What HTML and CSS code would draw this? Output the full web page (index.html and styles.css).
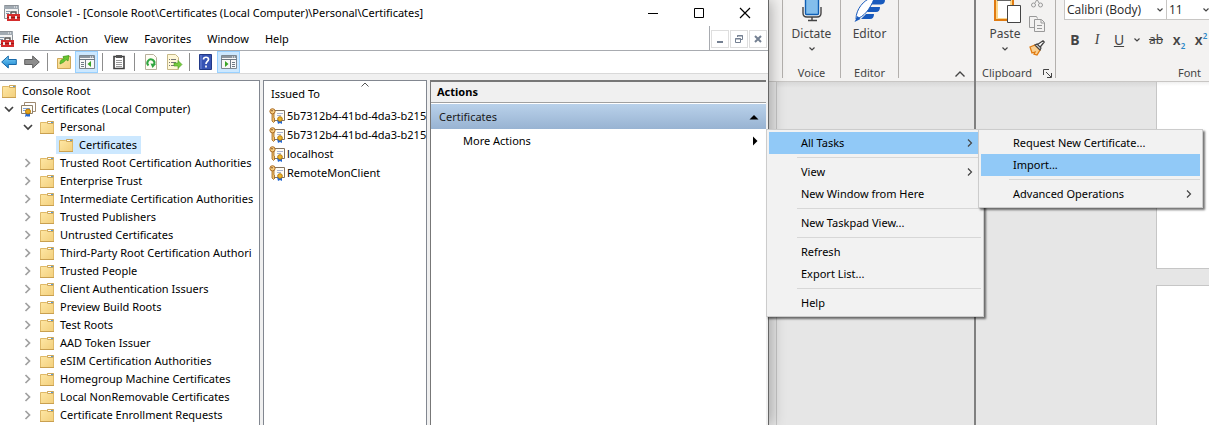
FILE: index.html
```html
<!DOCTYPE html>
<html lang="en">
<head>
<meta charset="utf-8">
<title>Console1</title>
<link rel="stylesheet" href="styles.css">
</head>
<body>
<svg class="sprite" aria-hidden="true">
  <defs>
    <linearGradient id="folder-fill" x1="0" y1="0" x2="1" y2="1"><stop offset="0" stop-color="#ffe8a6"/><stop offset="1" stop-color="#f2cf7c"/></linearGradient>
    <linearGradient id="blue-arrow" x1="0" y1="0" x2="0" y2="1"><stop offset="0" stop-color="#7fd0f7"/><stop offset="1" stop-color="#1683cf"/></linearGradient>
  </defs>
  <symbol id="i-folder" viewBox="0 0 16 16"><path d="M1.500 3.500h6l1-1h6v12h-13z" fill="url(#folder-fill)" stroke="#dfb968"/><path d="M8.500 2.500h6v2h-6z" fill="#fff" stroke="#cfa85a"/><path d="M12 3.500h2" stroke="#5b9bd0"/><path d="M1 14.500h14" stroke="#c9a050"/></symbol>
  <symbol id="i-right" viewBox="0 0 16 16"><path d="M5.500 4l4 4-4 4" fill="none" stroke="#a0a0a0" stroke-width="1.700"/></symbol>
  <symbol id="i-down" viewBox="0 0 16 16"><path d="M4 6l4 4 4-4" fill="none" stroke="#404040" stroke-width="1.700"/></symbol>
  <symbol id="i-certs" viewBox="0 0 16 16"><path d="M4.500 1.500h11v9h-11z" fill="#fff" stroke="#a08a70"/><path d="M1.500 4.500h11v8h-11z" fill="#fffdf5" stroke="#8e7f6a"/><path d="M3 7.500h7M3 9.500h4" stroke="#7d9fd8"/><path d="M6 11l-1 5 2-1 1 1 1-1 1 1 0-5z" fill="#2468d2"/><circle cx="8" cy="10.500" r="2.500" fill="#e4a51b" stroke="#b67808"/></symbol>
  <symbol id="i-keycert" viewBox="0 0 17 16"><path d="M4.500 2.500h11v10h-11z" fill="#fffdf5" stroke="#82725f"/><path d="M8 5.500h6M8 7.500h4" stroke="#a9b3d2"/><path d="M8 12l1 4 2-1 2 1 0-5z" fill="#2468d2"/><circle cx="11" cy="11" r="2.300" fill="#edb72a" stroke="#b67808"/><path d="M3 5v8l1.500 1.500L6 13l-1-1 1-1-1-1V5" fill="#f1bf67" stroke="#9c6220" stroke-width=".8"/><circle cx="3.500" cy="3.300" r="2.600" fill="#f8cd80" stroke="#a96b25"/><circle cx="3" cy="2.700" r=".8" fill="#704820"/></symbol>
  <symbol id="i-mmc" viewBox="0 0 16 16"><path d="M.5.500h14v13H.5z" fill="#f4f4f4" stroke="#8c9298"/><path d="M0 1h15v3H0z" fill="#a1aab2"/><path d="M10 2h1m1 0h1" stroke="#fff"/><path d="M2 6.500h4M2 8.500h3" stroke="#8195a8"/><path d="M7 9V7h5v2" fill="none" stroke="#555" stroke-width="1.400"/><path d="M3 9h13v7H3z" fill="#d42d2d"/><path d="M3 12.500h13" stroke="#981818"/><path d="M5 11h2v3H5zm6 0h2v3h-2z" fill="#ececec"/></symbol>
  <symbol id="i-chev" viewBox="0 0 8 8"><path d="M1.500 2.500L4 5l2.500-2.500" fill="none" stroke="#444" stroke-width="1.200"/></symbol>
  <symbol id="i-sub" viewBox="0 0 8 8"><path d="M2 .5L5.500 4 2 7.500" fill="none" stroke="#444" stroke-width="1.200"/></symbol>
</svg>

<main class="desktop">
  <section class="console" aria-label="Console1">
    <header class="titlebar">
      <svg class="icon"><use href="#i-mmc"/></svg>
      <h1 class="title">Console1 - [Console Root\Certificates (Local Computer)\Personal\Certificates]</h1>
      <div class="caption">
        <button class="cap" aria-label="Minimize"><svg viewBox="0 0 12 12"><path d="M1 6.500h10" stroke="#000"/></svg></button>
        <button class="cap" aria-label="Maximize"><svg viewBox="0 0 12 12"><path d="M1.500 1.500h9v9h-9z" fill="none" stroke="#000"/></svg></button>
        <button class="cap" aria-label="Close"><svg viewBox="0 0 12 12"><path d="M1 1l10 10M11 1L1 11" stroke="#000" stroke-width="1.200"/></svg></button>
      </div>
    </header>
    <div class="menubar">
      <nav class="menus">
        <svg class="icon"><use href="#i-mmc"/></svg>
        <button>File</button><button>Action</button><button>View</button><button>Favorites</button><button>Window</button><button>Help</button>
      </nav>
      <div class="mdi">
        <button aria-label="Minimize document"><svg viewBox="0 0 10 10"><path d="M2 8h6" stroke="#748092" stroke-width="2"/></svg></button>
        <button aria-label="Restore document"><svg viewBox="0 0 10 10"><path d="M3.500 3V1.500h5v4H7M1.500 4.500h5v4h-5zM1 5h6M3 2h6" fill="none" stroke="#748092"/></svg></button>
        <button aria-label="Close document"><svg viewBox="0 0 10 10"><path d="M2 2l6 6M8 2L2 8" stroke="#748092" stroke-width="2"/></svg></button>
      </div>
    </div>
    <div class="toolbar">
      <button aria-label="Back"><svg viewBox="0 0 16 16"><path d="M.7 8l6.600-6v3.500h8v5h-8V14z" fill="url(#blue-arrow)" stroke="#1768a8"/></svg></button>
      <button aria-label="Forward"><svg viewBox="0 0 16 16"><path d="M15.300 8L8.700 2v3.500h-8v5h8V14z" fill="#8d8d8d" stroke="#606060"/></svg></button>
      <i class="rule"></i>
      <button aria-label="Up one level"><svg viewBox="0 0 16 16"><path d="M1.500 4.500h5l2-2h6v12h-13z" fill="url(#folder-fill)" stroke="#cfa85a"/><path d="M4 10c0-4 2-5 4-5L7 2.500l6-1-1 5.500-2-1.500c-2 3-3 3-6 4.500z" fill="#67c52f" stroke="#3f981d" stroke-width=".7"/></svg></button>
      <button class="on" aria-label="Show console tree"><svg viewBox="0 0 16 16"><path d="M.5 1.500h15v13H.5z" fill="#f8f8f8" stroke="#7d8891"/><path d="M1 3h14" stroke="#8b959e" stroke-width="2"/><path d="M11 3h1m1 0h1" stroke="#fff"/><path d="M0 5.500h16M6.500 5v9M2 8.500h3M2 10.500h3M2 12.500h3" stroke="#6f7a84"/><path d="M12 7v6L8.500 10z" fill="#39a526"/></svg></button>
      <i class="rule"></i>
      <button aria-label="Properties"><svg viewBox="0 0 16 16"><path d="M3 2.500h10v12H3z" fill="#fff" stroke="#404040" stroke-width="1.600"/><path d="M5 1h6v3H5z" fill="#555"/><path d="M5 6.500h6M5 8.500h6M5 10.500h6M5 12.500h6" stroke="#999"/></svg></button>
      <i class="rule"></i>
      <button aria-label="Refresh"><svg viewBox="0 0 16 16"><path d="M2.500.500h8l3 3v12h-11z" fill="#fffdf4" stroke="#b7b09b"/><path d="M5.500 11.500a3.500 3.500 0 1 1 5.500-1" fill="none" stroke="#31a640" stroke-width="2"/><path d="M7.500 9.500L13 10l-3.500 4z" fill="#31a640"/></svg></button>
      <button aria-label="Export list"><svg viewBox="0 0 16 16"><path d="M1.500.500h8l3 3v12h-11z" fill="#fff8d8" stroke="#c6b887"/><path d="M3 5.500h1m1 0h5M3 8.500h1m1 0h5M3 11.500h1m1 0h5" stroke="#777"/><path d="M8 9h4V6.500l4 4-4 4V12H8z" fill="#75ca3d" stroke="#459c1c" stroke-width=".6"/></svg></button>
      <i class="rule"></i>
      <button aria-label="Help"><svg viewBox="0 0 16 16"><path d="M1.500.500h12v15h-12z" fill="#3653b4" stroke="#223987"/><path d="M3 1v14" stroke="#7189d8"/><path d="M5.500 5.500c0-3 5-3 5 0 0 2-2.500 2-2.500 4.500M8 11.500v2" fill="none" stroke="#fff" stroke-width="1.700"/></svg></button>
      <button class="on" aria-label="Show action pane"><svg viewBox="0 0 16 16"><path d="M.5 1.500h15v13H.5z" fill="#f8f8f8" stroke="#7d8891"/><path d="M1 3h14" stroke="#8b959e" stroke-width="2"/><path d="M11 3h1m1 0h1" stroke="#fff"/><path d="M0 5.500h16M9.500 5v9M11 8.500h3M11 10.500h3M11 12.500h3" stroke="#6f7a84"/><path d="M4 7v6l3.500-3z" fill="#39a526"/></svg></button>
    </div>
    <div class="panes">
      <nav class="tree pane" aria-label="Console tree">
        <ul>
          <li class="node root"><svg class="icon"><use href="#i-folder"/></svg><span>Console Root</span></li>
          <li class="node"><button aria-label="Collapse"><svg><use href="#i-down"/></svg></button><svg class="icon"><use href="#i-certs"/></svg><span>Certificates (Local Computer)</span></li>
          <li class="node l2"><button aria-label="Collapse"><svg><use href="#i-down"/></svg></button><svg class="icon"><use href="#i-folder"/></svg><span>Personal</span></li>
          <li class="node l3"><div class="picked"><svg class="icon"><use href="#i-folder"/></svg><span>Certificates</span></div></li>
          <li class="node l2"><button aria-label="Expand"><svg><use href="#i-right"/></svg></button><svg class="icon"><use href="#i-folder"/></svg><span>Trusted Root Certification Authorities</span></li>
          <li class="node l2"><button aria-label="Expand"><svg><use href="#i-right"/></svg></button><svg class="icon"><use href="#i-folder"/></svg><span>Enterprise Trust</span></li>
          <li class="node l2"><button aria-label="Expand"><svg><use href="#i-right"/></svg></button><svg class="icon"><use href="#i-folder"/></svg><span>Intermediate Certification Authorities</span></li>
          <li class="node l2"><button aria-label="Expand"><svg><use href="#i-right"/></svg></button><svg class="icon"><use href="#i-folder"/></svg><span>Trusted Publishers</span></li>
          <li class="node l2"><button aria-label="Expand"><svg><use href="#i-right"/></svg></button><svg class="icon"><use href="#i-folder"/></svg><span>Untrusted Certificates</span></li>
          <li class="node l2"><button aria-label="Expand"><svg><use href="#i-right"/></svg></button><svg class="icon"><use href="#i-folder"/></svg><span>Third-Party Root Certification Authori</span></li>
          <li class="node l2"><button aria-label="Expand"><svg><use href="#i-right"/></svg></button><svg class="icon"><use href="#i-folder"/></svg><span>Trusted People</span></li>
          <li class="node l2"><button aria-label="Expand"><svg><use href="#i-right"/></svg></button><svg class="icon"><use href="#i-folder"/></svg><span>Client Authentication Issuers</span></li>
          <li class="node l2"><button aria-label="Expand"><svg><use href="#i-right"/></svg></button><svg class="icon"><use href="#i-folder"/></svg><span>Preview Build Roots</span></li>
          <li class="node l2"><button aria-label="Expand"><svg><use href="#i-right"/></svg></button><svg class="icon"><use href="#i-folder"/></svg><span>Test Roots</span></li>
          <li class="node l2"><button aria-label="Expand"><svg><use href="#i-right"/></svg></button><svg class="icon"><use href="#i-folder"/></svg><span>AAD Token Issuer</span></li>
          <li class="node l2"><button aria-label="Expand"><svg><use href="#i-right"/></svg></button><svg class="icon"><use href="#i-folder"/></svg><span>eSIM Certification Authorities</span></li>
          <li class="node l2"><button aria-label="Expand"><svg><use href="#i-right"/></svg></button><svg class="icon"><use href="#i-folder"/></svg><span>Homegroup Machine Certificates</span></li>
          <li class="node l2"><button aria-label="Expand"><svg><use href="#i-right"/></svg></button><svg class="icon"><use href="#i-folder"/></svg><span>Local NonRemovable Certificates</span></li>
          <li class="node l2"><button aria-label="Expand"><svg><use href="#i-right"/></svg></button><svg class="icon"><use href="#i-folder"/></svg><span>Certificate Enrollment Requests</span></li>
        </ul>
      </nav>
      <div class="list pane">
        <svg class="sort" viewBox="0 0 8 5"><path d="M.5 4.500L4 1l3.500 3.500" fill="none" stroke="#555"/></svg>
        <table>
          <thead><tr><th>Issued To</th></tr></thead>
          <tbody>
            <tr><td><div class="cert"><svg><use href="#i-keycert"/></svg>5b7312b4-41bd-4da3-b215</div></td></tr>
            <tr><td><div class="cert"><svg><use href="#i-keycert"/></svg>5b7312b4-41bd-4da3-b215</div></td></tr>
            <tr><td><div class="cert"><svg><use href="#i-keycert"/></svg>localhost</div></td></tr>
            <tr><td><div class="cert"><svg><use href="#i-keycert"/></svg>RemoteMonClient</div></td></tr>
          </tbody>
        </table>
      </div>
      <aside class="actions">
        <h2>Actions</h2>
        <button class="section"><span>Certificates</span><svg viewBox="0 0 10 10"><path d="M.5 7.500h9L5 3z"/></svg></button>
        <div class="more">
          <button class="more-btn"><span>More Actions</span><svg viewBox="0 0 10 10"><path d="M3 .500v9L7.500 5z"/></svg></button>
          <ul class="popup">
            <li class="has-sub"><button class="hot">All Tasks<svg><use href="#i-sub"/></svg></button>
              <ul class="popup sub">
                <li><button>Request New Certificate...</button></li>
                <li><button class="hot">Import...</button></li>
                <li class="sep"></li>
                <li><button>Advanced Operations<svg><use href="#i-sub"/></svg></button></li>
              </ul>
            </li>
            <li class="sep"></li>
            <li><button>View<svg><use href="#i-sub"/></svg></button></li>
            <li><button>New Window from Here</button></li>
            <li class="sep"></li>
            <li><button>New Taskpad View...</button></li>
            <li class="sep"></li>
            <li><button>Refresh</button></li>
            <li><button>Export List...</button></li>
            <li class="sep"></li>
            <li><button>Help</button></li>
          </ul>
        </div>
      </aside>
    </div>
  </section>

  <section class="word first" aria-label="Document window">
    <div class="ribbon">
      <div class="group">
        <button class="big"><svg viewBox="0 0 32 24"><path d="M9.500 -6h13v19.500q0 1-1 1h-11q-1 0-1-1z" fill="#83beec" stroke="#0f5fb4" stroke-width="1.400"/><path d="M7 7v6q0 4 4 4h10q4 0 4-4V7M16 17v3M12 20.500h9" fill="none" stroke="#444" stroke-width="1.400"/></svg>Dictate<svg class="chev"><use href="#i-chev"/></svg></button>
        <span class="label">Voice</span>
      </div>
      <div class="group">
        <button class="big"><svg viewBox="0 0 32 24"><path d="M16 2V-2h16v2q0 4-4 4.500H17M16 7h11q0 5-4 5H14M13 14h8q0 5-4 5H8z" fill="#185abd"/><path d="M3 19C3 9 11 0 18-2l3 1C17 9 11 17 3 19z" fill="#fff" stroke="#185abd"/><path d="M1.500 22l3-6 3 3z" fill="#185abd"/></svg>Editor</button>
        <span class="label">Editor</span>
      </div>
      <button class="collapse" aria-label="Collapse ribbon"><svg viewBox="0 0 10 6"><path d="M.5 5.500L5 1l4.500 4.500" fill="none" stroke="#444" stroke-width="1.400"/></svg></button>
    </div>
    <div class="canvas"></div>
  </section>

  <section class="word second" aria-label="Document window">
    <div class="ribbon">
      <div class="group clip">
        <div class="clip-tools">
          <button class="big"><svg viewBox="0 0 32 24"><path d="M6-4h18v24H6z" fill="#fbd78b" stroke="#e07a10" stroke-width="2"/><path d="M9-2h12v20H9z" fill="#fff"/><path d="M8 .500h14" stroke="#666"/><path d="M18.500 5.500h13v17h-13z" fill="#fff" stroke="#444"/></svg>Paste<svg class="chev"><use href="#i-chev"/></svg></button>
          <div class="mini">
            <button aria-label="Cut"><svg viewBox="0 0 16 16"><path d="M4 0l6 11M12 0L6 11" stroke="#999"/><circle cx="4.500" cy="13" r="2" fill="none" stroke="#999"/><circle cx="11.500" cy="13" r="2" fill="none" stroke="#999"/></svg></button>
            <button aria-label="Copy"><svg viewBox="0 0 16 16"><path d="M5 11.500H.5V.500h7l1 2" fill="#f3f2f1" stroke="#999"/><path d="M5.500 3.500h7l3 3v9h-10z" fill="#f3f2f1" stroke="#999"/><path d="M12 4v3h3M8 9.500h5M8 12.500h5" fill="none" stroke="#999"/></svg></button>
            <button aria-label="Format painter"><svg viewBox="0 0 16 16"><path d="M1 7l5-2 5 5-3 5-3-1 1-2-3 1z" fill="#f9cf91" stroke="#e07a10" stroke-width="1.300"/><path d="M6 5l2-1 4 4-1 2zM8.500 4.500L14 .800l1.200 1.200-4 5" fill="#fff" stroke="#444" stroke-width="1.300"/></svg></button>
          </div>
        </div>
        <div class="clip-label"><span>Clipboard</span><button aria-label="Clipboard options"><svg viewBox="0 0 9 9"><path d="M.5 6V.500H6M3 3l5 5M8.500 4v4.500H4" fill="none" stroke="#444"/></svg></button></div>
      </div>
      <div class="group font">
        <div class="combos">
          <div class="combo"><select aria-label="Font name"><option>Calibri (Body)</option></select><svg class="chev"><use href="#i-chev"/></svg></div>
          <div class="combo size"><select aria-label="Font size"><option>11</option></select><svg class="chev"><use href="#i-chev"/></svg></div>
        </div>
        <div class="formats">
          <button class="b">B</button><button class="i">I</button><button class="u">U</button><button aria-label="Underline styles" class="drop"><svg class="chev"><use href="#i-chev"/></svg></button><button class="s">ab</button><button class="x">x<sub>2</sub></button><button class="x">x<sup>2</sup></button>
        </div>
        <span class="label">Font</span>
      </div>
    </div>
    <div class="canvas pages"><div class="page"></div><div class="page"></div></div>
  </section>
</main>
</body>
</html>
```
FILE: styles.css
```css
* { box-sizing: border-box; }
body {
  margin: 0;
  font: 11px/18px "Noto Sans", "Open Sans", sans-serif;
  color: #000;
  overflow: hidden;
}
button {
  font: inherit;
  color: inherit;
  background: none;
  border: 0;
  padding: 0;
  margin: 0;
}
svg { display: block; flex: none; overflow: visible; }
ul { list-style: none; margin: 0; padding: 0; }
.sprite { position: absolute; width: 0; height: 0; }
.icon { width: 16px; height: 16px; }

.desktop {
  display: grid;
  grid-template-columns: minmax(0, 769fr) minmax(0, 205fr) minmax(0, 235fr);
  min-height: 100vh;
}

/* Console window */
.console {
  position: relative;
  z-index: 2;
  display: flex;
  flex-direction: column;
  height: 100vh;
  background: #fff;
  border-right: 1px solid #666;
  box-shadow: 2px 0 14px rgba(0, 0, 0, .3);
}
.titlebar { display: flex; align-items: center; height: 26px; padding-left: 4px; }
.title { flex: 1; margin: 0 0 0 6px; font-size: 11px; font-weight: 400; white-space: nowrap; }
.caption { display: flex; }
.cap { width: 46px; height: 24px; display: grid; place-items: center; }
.cap svg { width: 12px; height: 12px; }
.menubar { display: flex; height: 25px; border-bottom: 1px solid #a8abb0; }
.menus { flex: 1; display: flex; align-items: center; padding-top: 2px; }
.menus .icon { margin: 0 2px 0 -2px; }
.menus button { padding: 0 6px; margin-right: 4px; }
.mdi { display: flex; gap: 1px; padding: 4px 1px 0 1px; border-left: 1px solid #a8abb0; }
.mdi button { display: grid; place-items: center; width: 18px; height: 18px; border: 1px solid #dedede; }
.mdi svg { width: 10px; height: 10px; }
.toolbar { display: flex; align-items: center; height: 23px; margin-left: -3px; border-bottom: 1px solid #d9d9d9; }
.toolbar button { display: grid; place-items: center; width: 23px; height: 22px; }
.toolbar svg { width: 16px; height: 16px; }
.toolbar .on { background: #cce8ff; border: 1px solid #99d1ff; }
.rule { width: 1px; height: 18px; margin: 0 4px; background: #8d8d8d; }

.panes {
  flex: 1;
  min-height: 0;
  display: grid;
  grid-template-columns: minmax(0, 260fr) minmax(0, 164fr) minmax(0, 336fr);
  gap: 3px;
  padding: 6px 2px 0 0;
  background: #f0f0f0;
}
.pane { background: #fff; border: 1px solid #828790; border-bottom: 0; overflow: hidden; white-space: nowrap; }
.tree { border-left: 0; padding: 1px 0 0 1px; }
.node { display: flex; align-items: center; height: 18px; }
.node button { width: 16px; height: 16px; margin-right: 3px; }
.node button svg { width: 16px; height: 16px; }
.node span { margin-left: 5px; }
.l2 { padding-left: 19px; }
.l3 { padding-left: 55px; }
.picked { display: flex; align-items: center; height: 18px; padding: 0 4px 0 2px; background: #cce8ff; }

.list { position: relative; }
.list table { width: 100%; border-collapse: collapse; table-layout: fixed; }
.list th { height: 25px; padding: 1px 0 0 7px; font-weight: 400; text-align: left; }
.list td { padding: 0; overflow: hidden; }
.cert { display: flex; align-items: center; gap: 1px; height: 19px; padding-left: 5px; }
.cert svg { width: 17px; height: 16px; }
.sort { position: absolute; top: 1px; left: 60%; width: 8px; height: 5px; }

.actions { min-width: 0; background: #fff; border: solid #777; border-width: 2px 0 0 1px; }
.actions h2 { margin: 0; padding: 1px 6px 0; height: 21px; font-size: 11px; line-height: 18px; font-weight: 700; background: #f0f0f0; border-bottom: 1px solid #a0a0a0; }
.section {
  display: flex; align-items: center; justify-content: space-between;
  width: 100%; height: 25px; margin-top: 1px; padding: 0 7px 0 8px;
  background: linear-gradient(#b9d1ea, #98b3d2);
  color: #1a1a1a;
}
.section svg, .more-btn svg { width: 10px; height: 10px; }
.more { position: relative; }
.more-btn { display: flex; align-items: center; justify-content: space-between; width: 100%; height: 24px; padding: 0 6px 0 32px; }

.popup {
  position: absolute;
  top: 0;
  left: 100%;
  z-index: 3;
  width: 218px;
  padding: 2px;
  background: #f2f2f2;
  border: 1px solid #ccc;
  box-shadow: 2px 2px 2px rgba(0, 0, 0, .55);
}
.popup button { display: flex; align-items: center; justify-content: space-between; width: 100%; height: 22px; padding: 0 7px 0 32px; }
.popup svg { width: 8px; height: 8px; }
.popup .hot { background: #91c9f7; }
.has-sub { position: relative; }
.popup.sub { top: -3px; left: 209px; width: 225px; }
.sep { height: 7px; padding: 3px 0 3px 28px; }
.sep::before { content: ""; display: block; height: 1px; background: #d7d7d7; }

/* Word windows */
.word { display: flex; flex-direction: column; min-width: 0; height: 100vh; overflow: hidden; background: #e6e6e6; color: #444; }
.ribbon { display: flex; flex: none; height: 82px; background: #f3f2f1; border-bottom: 1px solid #c8c6c4; }
.first .ribbon { padding-left: 13px; }
.group { flex: none; display: flex; flex-direction: column; justify-content: space-between; align-items: center; width: 58px; height: 78px; border-right: 1px solid #b3b0ad; }
.first .group:first-child { border-left: 1px solid #b3b0ad; width: 59px; }
.label { line-height: 10px; }
.big { display: flex; flex-direction: column; align-items: center; font-size: 12px; line-height: 18px; }
.big > svg:first-child { width: 32px; height: 24px; margin-bottom: 1px; }
.big .chev { margin-top: 2px; }
.chev { width: 8px; height: 8px; }
.collapse { margin: auto 9px 4px auto; }
.collapse svg { width: 10px; height: 6px; }
.canvas { flex: 1; background: linear-gradient(#d8d8d8, #e6e6e6 6px); }
.first .canvas { margin-left: 7px; border-left: 1px solid #c6c6c6; }
.second { border-left: 2px solid #808080; }
.clip { width: 80px; align-items: stretch; }
.clip-tools { display: flex; justify-content: space-between; padding: 0 10px 0 13px; }
.mini { display: flex; flex-direction: column; gap: 8px; margin-top: -8px; }
.mini svg { width: 16px; height: 16px; }
.clip-label { display: flex; align-items: center; justify-content: space-between; height: 10px; line-height: 10px; padding: 0 3px 0 6px; }
.clip-label svg { width: 9px; height: 9px; }
.font { width: 267px; border: 0; padding-left: 8px; align-items: stretch; }
.font .label { padding-right: 8px; text-align: center; }
.combos { display: flex; height: 20px; }
.combo { display: flex; align-items: center; width: 103px; height: 20px; background: #fff; border: 1px solid #c8c6c4; border-top: 0; }
.combo select { flex: 1; min-width: 0; appearance: none; border: 0; padding: 0 2px; margin: 0; background: none; font: inherit; font-family: "Open Sans", "Noto Sans", sans-serif; font-size: 12px; color: #262626; }
.combo .chev { margin-right: 2px; }
.combo.size { width: 46px; border-left: 0; }
.formats { display: flex; align-items: center; height: 24px; margin-bottom: 8px; font-size: 14px; }
.formats button { width: 22px; text-align: center; }
.formats .drop { width: 14px; display: grid; place-items: center; }
.formats .b { font-weight: 700; }
.formats .i { font-style: italic; font-family: "Liberation Serif", serif; }
.formats .u { text-decoration: underline; }
.formats .s { text-decoration: line-through; width: 24px; font-size: 12px; }
.formats .x { font-weight: 600; }
.formats sub, .formats sup { font-size: 8px; line-height: 8px; color: #2b88c8; }
.pages { display: flex; flex-direction: column; gap: 16px; padding-left: 180px; }
.page { height: 187px; flex: none; background: linear-gradient(#f0f0f0, #fff 4px); border: solid #c6c6c6; border-width: 0 0 1px 1px; }
.page + .page { background: #fff; border-width: 1px 0 0 1px; }
```
